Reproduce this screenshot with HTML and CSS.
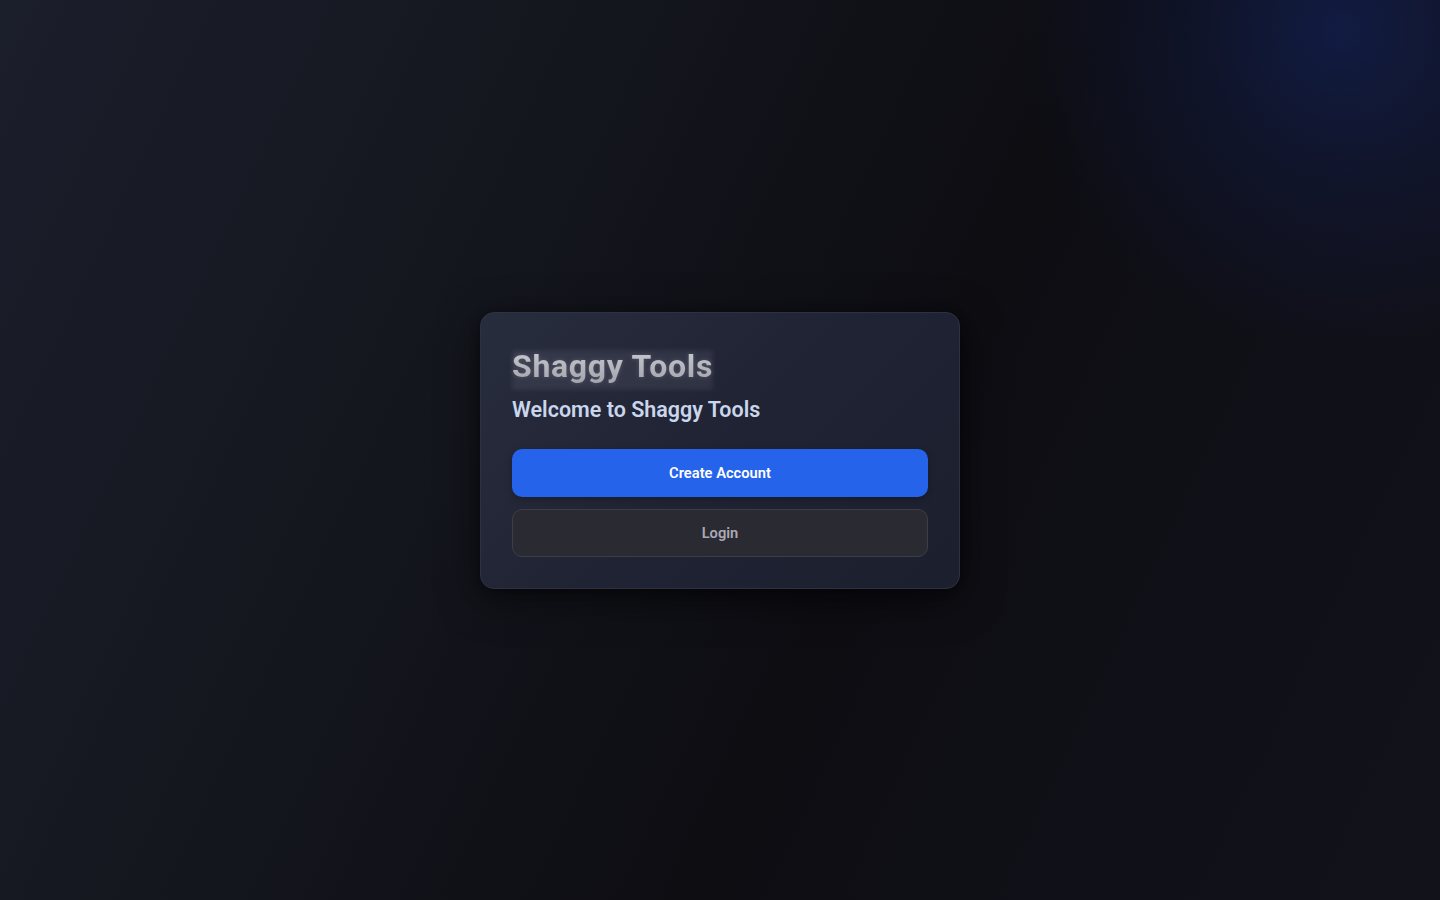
FILE: index.html
```html
<!DOCTYPE html>
<html lang="en">
<head>
<meta charset="utf-8">
<title>Shaggy Tools</title>
<link rel="stylesheet" href="styles.css">
</head>
<body>
<main class="page">
  <section class="card">
    <h1 class="brand"><span class="brand-text">Shaggy Tools</span></h1>
    <h2 class="welcome">Welcome to Shaggy Tools</h2>
    <div class="actions">
      <button class="btn btn-primary">Create Account</button>
      <button class="btn btn-secondary">Login</button>
    </div>
  </section>
</main>
</body>
</html>
```

FILE: styles.css
```css
* { box-sizing: border-box; }
html, body { height: 100%; }
body {
  margin: 0;
  font-family: Roboto, "Noto Sans", "Liberation Sans", sans-serif;
  background:
    radial-gradient(circle at 1340px 30px, rgba(20, 40, 110, 0.5) 0px, rgba(20, 36, 100, 0.25) 150px, rgba(15, 25, 70, 0) 320px),
    linear-gradient(115deg, #1b1e2b 0%, #15171f 30%, #0d0d12 60%, #101018 80%, #12121b 100%);
  color: #e5e7eb;
  overflow: hidden;
}
.page {
  height: 100%;
  display: flex;
  align-items: center;
  justify-content: center;
}
.card {
  width: 480px;
  padding: 31px;
  border: 1px solid #2d3242;
  border-radius: 14px;
  background: linear-gradient(135deg, #282d3d 0%, #202333 50%, #1c1f2e 100%);
  box-shadow: 0 10px 40px rgba(0, 0, 0, 0.55), 0 2px 8px rgba(0, 0, 0, 0.35);
}
.brand {
  margin: 0 0 8px;
  font-size: 32px;
  line-height: 44px;
  font-weight: 700;
  letter-spacing: 0.7px;
}
.brand-text {
  position: relative;
  display: inline-block;
  color: #b9b9c0;
  background: linear-gradient(180deg, #d0d0d6 0%, #b6b6bd 50%, #9c9ca4 100%);
  -webkit-background-clip: text;
  background-clip: text;
  -webkit-text-fill-color: transparent;
  filter: drop-shadow(0 0 2px rgba(200, 200, 215, 0.25));
}
.brand-text::before {
  content: "";
  position: absolute;
  left: 0;
  right: 0;
  top: 6px;
  bottom: -2px;
  background: rgba(190, 195, 215, 0.08);
  filter: blur(2px);
  z-index: -1;
}
.welcome {
  margin: 0 0 25px;
  font-size: 21.5px;
  line-height: 28px;
  font-weight: 600;
  color: #c9d6ec;
}
.actions {
  display: flex;
  flex-direction: column;
  gap: 12px;
}
.btn {
  display: block;
  width: 100%;
  height: 48px;
  border-radius: 10px;
  font-family: inherit;
  font-size: 14.7px;
  font-weight: 600;
  cursor: pointer;
}
.btn-primary {
  border: none;
  background: #2563eb;
  color: #ffffff;
  box-shadow: 0 2px 6px rgba(0, 0, 0, 0.25);
}
.btn-secondary {
  border: 1px solid #3c3d48;
  background: #2a2a33;
  color: #a9a9b4;
}
```
